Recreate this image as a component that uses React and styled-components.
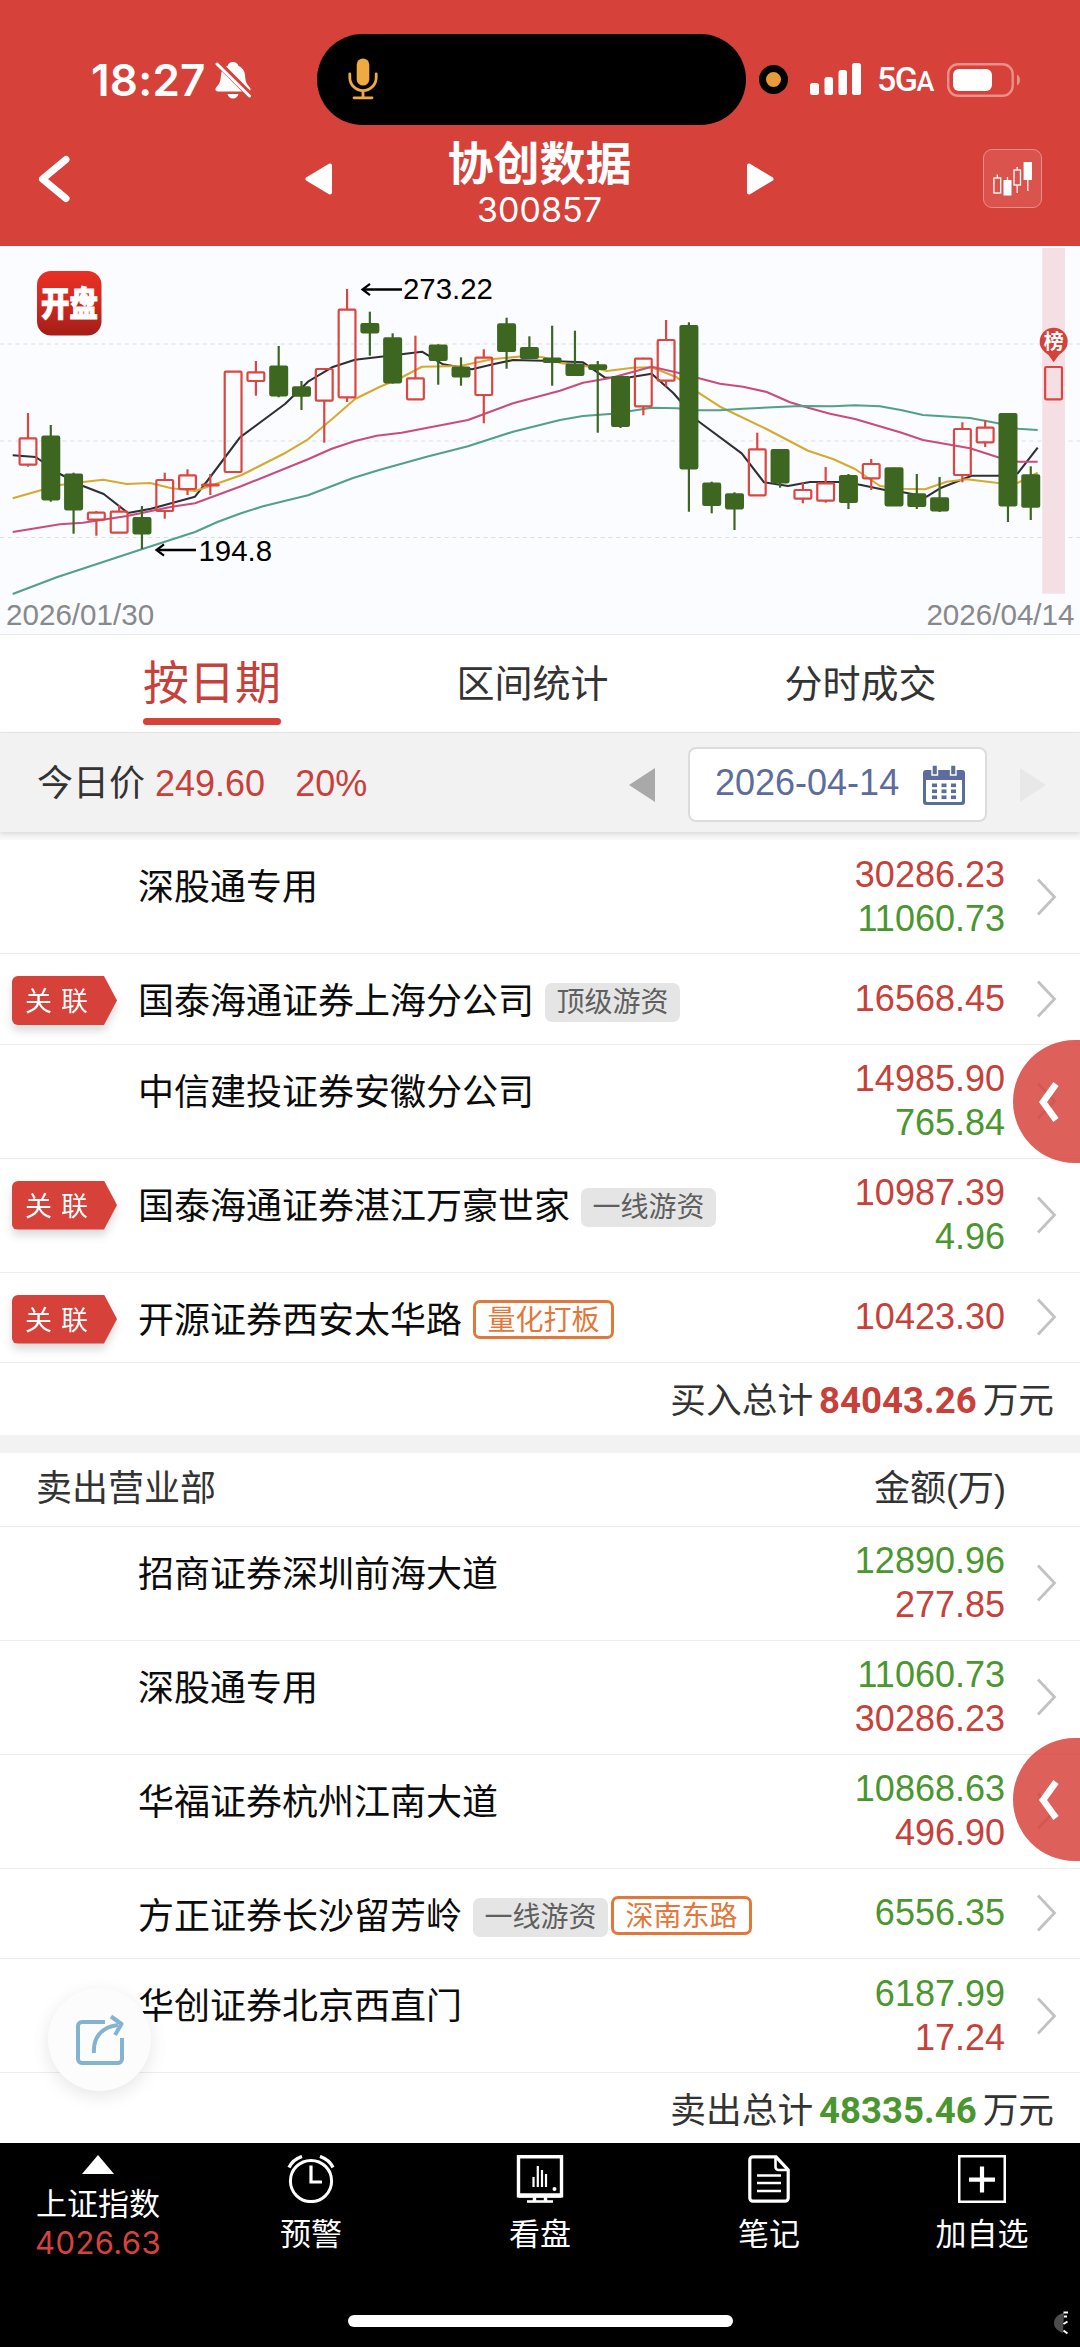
import styled, { createGlobalStyle, css } from "styled-components"

const colors = {
  brand: "#d6413a",
  red: "#c8403a",
  green: "#4a962f",
  candleGreen: "#3d6720",
  candleRed: "#dc4640",
  orange: "#e2773a",
  blue: "#5c6c9c",
}

const cjk = `"Noto Sans CJK SC", sans-serif`

const GlobalStyle = createGlobalStyle`
  * { box-sizing: border-box; }
  body {
    margin: 0;
    background: #fff;
    font-family: "Liberation Sans", ${cjk};
    color: #111;
  }
  svg { display: block; }
`

const buyRows = [
  { name: "深股通专用", main: "30286.23", sub: "11060.73" },
  { name: "国泰海通证券上海分公司", linked: true, tags: ["顶级游资"], main: "16568.45" },
  { name: "中信建投证券安徽分公司", main: "14985.90", sub: "765.84" },
  { name: "国泰海通证券湛江万豪世家", linked: true, tags: ["一线游资"], main: "10987.39", sub: "4.96" },
  { name: "开源证券西安太华路", linked: true, seats: ["量化打板"], main: "10423.30" },
]

const sellRows = [
  { name: "招商证券深圳前海大道", main: "12890.96", sub: "277.85" },
  { name: "深股通专用", main: "11060.73", sub: "30286.23" },
  { name: "华福证券杭州江南大道", main: "10868.63", sub: "496.90" },
  { name: "方正证券长沙留芳岭", tags: ["一线游资"], seats: ["深南东路"], main: "6556.35" },
  { name: "华创证券北京西直门", main: "6187.99", sub: "17.24" },
]

// up, high, body top, body bottom, low
const candles = [
  [1, 167, 192.3, 218.7, 220.7],
  [0, 179, 190.7, 253.3, 255.7],
  [0, 226.7, 228.7, 263.3, 287.7],
  [1, 265, 266.7, 273.7, 289.7],
  [1, 259, 265.7, 286.7, 287],
  [0, 260, 272, 287.3, 303],
  [1, 226.7, 234, 265, 272.7],
  [1, 223.3, 229.3, 243, 249],
  [1, 228, 238.5, 239.5, 249],
  [1, 125.7, 125.7, 226, 226],
  [1, 115, 126.3, 135, 149.7],
  [0, 100, 120.7, 149.3, 151.3],
  [0, 135, 141.3, 149.7, 164],
  [1, 122.5, 123, 154.7, 196.7],
  [1, 43, 63.7, 151.3, 156],
  [0, 65.7, 78, 86.3, 109.7],
  [0, 87.3, 92.3, 136.3, 137.7],
  [1, 89.7, 132.3, 153.3, 153.3],
  [0, 98.3, 99.7, 114, 138.7],
  [0, 111.3, 121.7, 130.3, 139.7],
  [1, 103.3, 111.7, 149, 177.3],
  [0, 71.7, 78.3, 105, 122.7],
  [0, 90.3, 102, 112, 112.7],
  [0, 79.7, 112.7, 116, 139.7],
  [0, 84.7, 118.7, 129, 129],
  [0, 115, 119.3, 123, 186.7],
  [0, 131, 131, 180, 182],
  [1, 111.7, 112.7, 160.3, 169.3],
  [1, 74, 94, 134.7, 140.7],
  [0, 76.3, 80, 222.3, 265.7],
  [0, 235.7, 237.7, 259, 267.3],
  [0, 246.3, 248.3, 262.3, 284],
  [1, 186.7, 203.3, 249.3, 249.3],
  [0, 204, 204, 236.3, 241.7],
  [1, 236.3, 244, 252.7, 257.3],
  [1, 221, 237.3, 254.7, 256.7],
  [0, 228, 230, 256, 263],
  [1, 213, 218, 232.3, 244],
  [0, 221.7, 222.3, 259.3, 259.3],
  [0, 228, 248.3, 260, 263],
  [0, 231, 252.3, 264.3, 266],
  [1, 176.3, 183, 229, 236.3],
  [1, 174.3, 181.7, 196.3, 201],
  [0, 168, 168, 259.3, 276],
  [0, 220.3, 229.3, 260.7, 274],
  [1, 121, 121, 153.3, 153.3],
]

const averages = [
  {
    color: "#2e3033",
    points:
      "12.7,209.3 35.7,211 60,228 83,240 103.7,248 128,267 151,262.7 195,250.7 208,234 240,191.3 285,158 308,135.7 332,121.3 355,113.7 385,110.3 422,105.7 443,118.3 472,123.3 493,118.3 513,114 543,114.7 583,116.3 605,131.7 630,131.3 651.7,127.7 673,146.7 698,175 741.7,207.3 764,236.3 788,240 810,236 840,236 860,238.7 885,244 903,246.3 926.7,250.7 940,242.3 971.7,229.7 998,229.7 1017.7,227.3 1037.7,201.7",
  },
  {
    color: "#d7a92c",
    points:
      "12.7,252.3 41.7,244 60,239 83,236 103.3,233.7 126.7,238 150,237 171.7,242.3 195,245 210,240 241.7,229 285.7,206.7 308,193.3 333,172.3 355,153 380,140.7 400,132.3 422,120.7 460,120 493,113 527,110 543,111.3 561.7,117.3 590,120.7 606.7,125 633,121.7 651.7,121.3 676.7,131.3 698,146.3 720,160.7 765,182.3 808,204.7 833,213 855,223 880,240 903,242.7 925,243.3 946.7,235.7 966.7,233.3 998,237 1018,236.7 1037.7,226.7",
  },
  {
    color: "#c84c80",
    points:
      "12.7,286 60,278.3 83,276.7 127,270 171.7,260.7 195,257.3 241.7,240 308,213.3 331.7,202.7 355,195 376.7,189.7 401.7,186.7 468,174 513,157.3 560,144.7 583,136.7 611.7,131.7 651.7,120.7 678,126.7 720,137.7 743,140.7 766.7,146 790,156.3 810,162.3 830,167.7 855,173 900,186.3 923,194 970,202.3 998,211.3 1018,215.7 1037.7,215.7",
  },
  {
    color: "#51a087",
    points:
      "12.7,348 56.7,331.3 141.7,303.3 195,286 218,275.7 241.7,267 263,260.3 308,249.3 353,232 380,223.7 426.7,210.7 468,200.3 513,185.7 560,174 583,170 613,167.7 651.7,161.7 677,162.3 698,164.3 720,164.3 743,162.7 800,160 833,160.3 855,159.3 880,160.3 902,164.3 923,169 970,172 998,177.3 1018,182.7 1037.7,184",
  },
]

const Candle = ({ index, data }) => {
  const [up, high, top, bottom, low] = data
  const x = 28 + 22.79 * index
  const color = up ? colors.candleRed : colors.candleGreen
  return (
    <g stroke={color} strokeWidth="2.2">
      {high < top && <line x1={x} x2={x} y1={high} y2={top} />}
      {low > bottom && <line x1={x} x2={x} y1={bottom} y2={low} />}
      <rect
        x={x - 8.4}
        y={top}
        width="16.8"
        height={bottom - top}
        rx="1"
        fill={up ? "none" : color}
      />
    </g>
  )
}

const Arrow = ({ x, y }) => (
  <g stroke="#000" fill="none">
    <path d={`M${x + 2} ${y}H${x + 41}`} strokeWidth="2.6" />
    <path d={`M${x + 9} ${y - 5.6}L${x + 1.5} ${y}L${x + 9} ${y + 5.6}`} strokeWidth="2.2" />
  </g>
)

const KLine = () => (
  <ChartView>
    <svg width="1080" height="389" viewBox="0 0 1080 389">
      <defs>
        <linearGradient id="logo" x1="0" y1="0" x2="0" y2="1">
          <stop offset="0" stopColor="#ea2f24" />
          <stop offset="0.5" stopColor="#cf2a20" />
          <stop offset="1" stopColor="#a31d16" />
        </linearGradient>
      </defs>
      {[98, 195, 291.5].map((y) => (
        <line key={y} x1="0" x2="1080" y1={y} y2={y} stroke="#dcdde1" strokeWidth="1.2" strokeDasharray="4 3.8" />
      ))}
      <rect x="1042.3" y="2" width="22.7" height="345.7" fill="#f4dfe4" />
      {averages.map((line) => (
        <polyline key={line.color} points={line.points} fill="none" stroke={line.color} strokeWidth="2.1" strokeLinejoin="round" />
      ))}
      {candles.map((data, i) => (
        <Candle key={i} index={i} data={data} />
      ))}
      <path d="M1053.7 81.7a14 14 0 0 1 14 14c0 7-5 10.500-9 13.500l-5 7-5-7c-4-3-9-6.500-9-13.500a14 14 0 0 1 14-14z" fill={colors.brand} />
      <PinText x="1053.7" y="103">榜</PinText>
      <rect x="37" y="25" width="64.500" height="64.500" rx="14" fill="url(#logo)" />
      <LogoText x="69.5" y="58" transform="translate(0 -13.5) scale(1 1.19)">开盘</LogoText>
      <Arrow x={361} y={43.5} />
      <PriceText x="403" y="53">273.22</PriceText>
      <Arrow x={155} y={304} />
      <PriceText x="198.5" y="314.500">194.8</PriceText>
      <DateText x="6" y="378.500">2026/01/30</DateText>
      <DateText x="1074.5" y="378.500" textAnchor="end">2026/04/14</DateText>
    </svg>
  </ChartView>
)

const SeatList = ({ rows, mainColor, subColor }) =>
  rows.map((row) => (
    <SeatRow key={row.name} $tall={!!row.sub}>
      <LinkCell>{row.linked && <LinkBadge><span>关 联</span></LinkBadge>}</LinkCell>
      <SeatName>
        <span>{row.name}</span>
        {(row.tags || row.seats) && (
          <Tags>
            {row.tags?.map((t) => <Tag key={t}>{t}</Tag>)}
            {row.seats?.map((t) => <Tag key={t} $outline>{t}</Tag>)}
          </Tags>
        )}
      </SeatName>
      <Amounts>
        <Amount $color={mainColor}>{row.main}</Amount>
        {row.sub && <Amount $color={subColor}>{row.sub}</Amount>}
      </Amounts>
      <svg width="22" height="38" viewBox="0 0 22 38" fill="none" stroke="#c2c2c4" strokeWidth="2.8">
        <path d="M2 1.500L18.500 19L2 36.500" />
      </svg>
    </SeatRow>
  ))

const SideHandle = ({ top }) => (
  <Handle $top={top}>
    <svg width="26" height="44" viewBox="0 0 26 44" fill="none" stroke="#fff" strokeWidth="6.500">
      <path d="M23 4L10 22L23 40" />
    </svg>
  </Handle>
)

export default function App() {
  return (
    <Page>
      <GlobalStyle />
      <Header>
        <StatusBar>
          <Clock>
            18:27
            <svg width="36" height="38" viewBox="0 0 36 38" fill="#fff">
              <path d="M18 1c-3.200 0-5 2-5.500 4-3.500 1.200-6 4.500-6.500 9-.4 6-1.500 9-4.500 12-2 2-1 4.500 1.500 4.500h30c2.500 0 3.500-2.500 1.500-4.500-3-3-4.100-6-4.500-12-.5-4.500-3-7.800-6.500-9C23 3 21.200 1 18 1zM12.500 33h11c-.5 2.700-2.700 4.500-5.500 4.500s-5-1.800-5.500-4.500z" />
              <path d="M1 0L36 35" stroke={colors.brand} strokeWidth="6.500" />
              <path d="M2 3L34.500 35" stroke="#fff" strokeWidth="3" strokeLinecap="round" />
            </svg>
          </Clock>
          <Island>
            <svg width="30" height="42" viewBox="0 0 30 42" fill="none" stroke="#efab41" strokeWidth="2.800" strokeLinecap="round">
              <rect x="8.700" y=".5" width="12.600" height="27" rx="6.300" fill="#efab41" stroke="none" />
              <path d="M1.800 16v3.500a13.200 13.200 0 0 0 26.400 0V16M15 33v6.500M6 39.800h18" />
            </svg>
          </Island>
          <Signals>
            <MicDot />
            <svg width="52" height="33" viewBox="0 0 52 33" fill="#fff">
              <rect x="0" y="20" width="9" height="12" rx="2.500" />
              <rect x="14.500" y="14" width="8.500" height="18" rx="2.500" />
              <rect x="28.500" y="7" width="8.500" height="25" rx="2.500" />
              <rect x="42" y="0" width="9" height="32" rx="2.500" />
            </svg>
            <Network>5G<small>A</small></Network>
            <svg width="74" height="34" viewBox="0 0 74 34">
              <rect x="1.200" y="1.200" width="64.500" height="31.600" rx="10" fill="none" stroke="#ec8e89" strokeWidth="2.400" />
              <rect x="6" y="6" width="39" height="22" rx="6" fill="#fff" />
              <path d="M70 11.500c4 2 4 9 0 11z" fill="#ec8e89" />
            </svg>
          </Signals>
        </StatusBar>
        <NavBar>
          <svg width="40" height="54" viewBox="0 0 40 54" fill="none" stroke="#fff" strokeWidth="7" strokeLinecap="round" strokeLinejoin="round">
            <path d="M28 7.500L4.500 27L28 46.500" />
          </svg>
          <Triangle width="27" height="32" viewBox="0 0 27 32">
            <path d="M25 2.500v27L2.500 16z" />
          </Triangle>
          <Title>
            <h1>协创数据</h1>
            <p>300857</p>
          </Title>
          <Triangle width="27" height="32" viewBox="0 0 27 32">
            <path d="M2 2.500v27L24.500 16z" />
          </Triangle>
          <ChartButton>
            <svg width="40" height="36" viewBox="0 0 40 36" fill="none" stroke="#fff" strokeWidth="1.300">
              <rect x=".9" y="17" width="6.800" height="15" />
              <path d="M4.300 13.500V17M14.500 16v4M24.200 6v3M24.200 24.500V32M34.800 18v12" />
              <rect x="10.500" y="19" width="8" height="15.500" fill="#fff" stroke="none" />
              <rect x="21" y="9" width="6.500" height="15" />
              <rect x="30.600" y="1" width="8.400" height="18" fill="#fff" stroke="none" />
            </svg>
          </ChartButton>
        </NavBar>
      </Header>

      <KLine />

      <Tabs>
        <Tab $active>按日期</Tab>
        <Tab>区间统计</Tab>
        <Tab>分时成交</Tab>
      </Tabs>

      <PriceBar>
        <div className="price">
          今日价 <b>249.60</b> <b>20%</b>
        </div>
        <div className="picker">
          <svg width="26" height="34" viewBox="0 0 26 34" fill="#a9a9a9">
            <path d="M26 0v34L0 17z" />
          </svg>
          <DateBox>
            <span>2026-04-14</span>
            <svg width="42" height="40" viewBox="0 0 42 40" fill={colors.blue}>
              <path fillRule="evenodd" d="M3 5h36a3 3 0 0 1 3 3v29a3 3 0 0 1-3 3H3a3 3 0 0 1-3-3V8a3 3 0 0 1 3-3zM3 15v20.500a1.500 1.500 0 0 0 1.500 1.500h33a1.500 1.500 0 0 0 1.500-1.500V15z" />
              <path d="M9 0h5.500v10H9zM27.500 0H33v10h-5.500z" stroke="#fff" strokeWidth="1.400" />
              {[18.5, 24.5, 30.5].map((y) =>
                [9, 18.5, 28].map((x) => <rect key={x + "-" + y} x={x} y={y} width="5" height="3.600" />)
              )}
            </svg>
          </DateBox>
          <svg width="26" height="34" viewBox="0 0 26 34" fill="#e8e8e8">
            <path d="M0 0v34L26 17z" />
          </svg>
        </div>
      </PriceBar>

      <Lists>
        <SeatList rows={buyRows} mainColor={colors.red} subColor={colors.green} />
        <Total $color={colors.red}>
          买入总计<b>84043.26</b>万元
        </Total>
        <SectionHead>
          <span>卖出营业部</span>
          <span>金额(万)</span>
        </SectionHead>
        <SeatList rows={sellRows} mainColor={colors.green} subColor={colors.red} />
        <Total $color={colors.green}>
          卖出总计<b>48335.46</b>万元
        </Total>
        <SideHandle top={200} />
        <SideHandle top={898} />
        <ShareButton>
          <svg width="48" height="52" viewBox="0 0 48 52" fill="none" stroke="#82b4d2" strokeWidth="4">
            <path d="M29 8H6a4 4 0 0 0-4 4v33a4 4 0 0 0 4 4h36a4 4 0 0 0 4-4V24" />
            <path d="M18 39C17 25 24 13 42 11" />
            <path d="M35 2.500L45.500 10L39 21" strokeLinejoin="round" />
          </svg>
        </ShareButton>
      </Lists>

      <Footer>
        <FooterItem $w={196}>
          <svg width="32" height="19" viewBox="0 0 32 19" fill="#fff">
            <path d="M16 0L32 19H0z" />
          </svg>
          <IndexName>上证指数</IndexName>
          <IndexValue>4026.63</IndexValue>
        </FooterItem>
        <FooterItem $w={230}>
          <svg width="48" height="48" viewBox="0 0 48 48" fill="none" stroke="#fff" strokeWidth="3">
            <circle cx="24" cy="26" r="20.600" />
            <path d="M24 10.500V27h11" strokeWidth="3.200" />
            <path d="M2 12.500C4.500 7.500 9 3.500 15 1.500M46 12.500C43.500 7.500 39 3.500 33 1.500" strokeWidth="3.400" />
          </svg>
          <span>预警</span>
        </FooterItem>
        <FooterItem $w={228}>
          <svg width="48" height="48" viewBox="0 0 48 48" fill="none" stroke="#fff" strokeWidth="3.400">
            <path d="M2.500 1.800h43v39h-43z" />
            <path d="M2.500 40.500h43" strokeWidth="4.400" />
            <path d="M18.500 42v4M29.500 42v4" />
            <path d="M11 46.500h26" strokeWidth="2.600" />
            <path d="M17.500 22v10M21.800 11v21M26 15v17M30 19v13" strokeWidth="2.200" />
            <circle cx="38.500" cy="34" r="2" fill="#fff" stroke="none" />
          </svg>
          <span>看盘</span>
        </FooterItem>
        <FooterItem $w={230}>
          <svg width="42" height="48" viewBox="0 0 42 48" fill="none" stroke="#fff" strokeWidth="3.200">
            <path d="M28 1.800H5A3.200 3.200 0 0 0 1.800 5v38A3.200 3.200 0 0 0 5 46.200h32a3.200 3.200 0 0 0 3.200-3.200V15z" />
            <path d="M27.500 2v10a3 3 0 0 0 3 3h9.500" strokeWidth="2.600" />
            <path d="M9 20.500h24M9 28h24M9 36h24" strokeWidth="2.600" />
          </svg>
          <span>笔记</span>
        </FooterItem>
        <FooterItem $w={196}>
          <svg width="48" height="48" viewBox="0 0 48 48" fill="none" stroke="#fff">
            <path d="M1.200 1.200h45.600v45.600H1.200z" strokeWidth="2.600" />
            <path d="M24 11.500v26M11 24.700h26" strokeWidth="4.200" />
          </svg>
          <span>加自选</span>
        </FooterItem>
        <HomeIndicator />
        <Corner width="14" height="24" viewBox="0 0 14 24">
          <path d="M10 2C4 3 0 7 0 12s4 8 9 10z" fill="#4c4c4c" />
          <path d="M9.500 1.500h4.500M10 5.500h3M9.500 13l4-2.500M9.500 19.500l4 3" stroke="#fff" strokeWidth="2" />
        </Corner>
      </Footer>
    </Page>
  )
}

const Page = styled.div`
  width: 1080px;
  height: 2347px;
  overflow: hidden;
  background: #fff;
`

const Header = styled.header`
  height: 246px;
  background: ${colors.brand};
  color: #fff;
`

const StatusBar = styled.div`
  display: grid;
  grid-template-columns: 317px 429px 1fr;
  align-items: center;
  padding-top: 34px;
  height: 125px;
`

const Clock = styled.div`
  display: flex;
  align-items: center;
  gap: 9px;
  padding-left: 91px;
  font: 600 44px/50px Inter, sans-serif;
  letter-spacing: 0.2px;
  svg {
    flex: none;
  }
`

const Island = styled.div`
  display: flex;
  align-items: center;
  height: 91px;
  padding-left: 31px;
  padding-bottom: 2px;
  border-radius: 46px;
  background: #000;
`

const Signals = styled.div`
  display: flex;
  align-items: center;
  padding-left: 13px;
`

const MicDot = styled.i`
  width: 29px;
  height: 29px;
  margin-right: 22px;
  border: 7.5px solid #000;
  border-radius: 50%;
  background: #e99b3a;
`

const Network = styled.div`
  width: 56px;
  margin: 2px 14px 0 15px;
  font: 500 34px/40px Roboto, sans-serif;
  letter-spacing: -1.5px;
  white-space: nowrap;
  small {
    font-size: 27px;
  }
`

const NavBar = styled.div`
  display: grid;
  grid-template-columns: 305px 27px 1fr 27px 208px 98px;
  align-items: center;
  height: 107px;
  > svg:first-child {
    margin-left: 38px;
  }
`

const Triangle = styled.svg`
  fill: #fff;
  stroke: #fff;
  stroke-width: 4;
  stroke-linejoin: round;
`

const Title = styled.div`
  text-align: center;
  margin-top: 6px;
  h1 {
    margin: 0 0 10px;
    font: 700 46px/46px ${cjk};
  }
  p {
    margin: 0;
    font: 400 34px/34px Inter, sans-serif;
    letter-spacing: 0;
  }
`

const ChartButton = styled.div`
  grid-column: 6;
  display: flex;
  align-items: center;
  justify-content: center;
  width: 59px;
  height: 59px;
  margin-left: 1px;
  border: 1.5px solid #eb8d88;
  border-radius: 9px;
  background: #da534d;
`

const ChartView = styled.section`
  height: 389px;
  background: #fbfcff;
  border-bottom: 1px solid #e6e8ec;
`

const PriceText = styled.text`
  font: 29.4px "Liberation Sans", sans-serif;
`

const DateText = styled.text`
  font: 29.6px "Liberation Sans", sans-serif;
  fill: #88898c;
`

const PinText = styled.text`
  font: 700 20px ${cjk};
  fill: #fff;
  text-anchor: middle;
`

const LogoText = styled.text`
  font: 900 28.5px ${cjk};
  fill: #fff;
  stroke: #fff;
  stroke-width: 0.8;
  text-anchor: middle;
  dominant-baseline: central;
`

const Tabs = styled.nav`
  display: flex;
  height: 98px;
  padding-left: 48px;
  border-bottom: 1px solid #e8e8e8;
`

const Tab = styled.div`
  width: 328px;
  text-align: center;
  font: 38px/92px ${cjk};
  color: #333;
  &:nth-child(2) {
    width: 313px;
  }
  &:nth-child(3) {
    width: 343px;
  }
  ${(p) =>
    p.$active &&
    css`
      display: flex;
      flex-direction: column;
      align-items: center;
      font-size: 46px;
      line-height: 89px;
      color: ${colors.red};
      &::after {
        content: "";
        width: 138px;
        height: 7px;
        margin-top: -6px;
        border-radius: 4px;
        background: ${colors.brand};
      }
    `}
`

const PriceBar = styled.div`
  position: relative;
  z-index: 1;
  display: flex;
  align-items: center;
  justify-content: space-between;
  height: 99px;
  padding: 4px 34px 0 37px;
  background: #f2f2f2;
  box-shadow: 0 2px 5px rgba(0, 0, 0, 0.13);
  .price {
    margin-top: -9px;
    font-size: 36px;
    color: #333;
    b {
      font-weight: 400;
      color: ${colors.red};
    }
    b:last-child {
      margin-left: 20px;
    }
  }
  .picker {
    display: flex;
    align-items: center;
    gap: 33px;
  }
`

const DateBox = styled.div`
  display: flex;
  align-items: center;
  justify-content: space-between;
  width: 299px;
  height: 75px;
  padding: 0 20px 0 25px;
  border: 2px solid #dcdcdc;
  border-radius: 8px;
  background: #fff;
  font-size: 36px;
  color: ${colors.blue};
  span {
    margin-top: -3px;
  }
`

const Lists = styled.main`
  position: relative;
  height: 1311px;
  border-top: 8px solid #f8f8f8;
`

const SeatRow = styled.div`
  display: flex;
  align-items: center;
  height: ${(p) => (p.$tall ? 114 : 90.5)}px;
  padding-right: 22px;
  border-bottom: 1.5px solid #ededed;
`

const LinkCell = styled.div`
  align-self: flex-start;
  width: 138px;
  padding: 22px 0 0 12px;
`

const LinkBadge = styled.div`
  width: 105px;
  height: 49px;
  filter: drop-shadow(0 6px 4px rgba(0, 0, 0, 0.14));
  span {
    display: block;
    height: 49px;
    padding-left: 13px;
    border-radius: 6px 0 0 6px;
    background: ${colors.brand};
    clip-path: polygon(0 0, 92px 0, 100% 50%, 92px 100%, 0 100%);
    font: 27px/47px ${cjk};
    word-spacing: 3px;
    color: #fff;
    white-space: nowrap;
  }
`

const SeatName = styled.div`
  display: flex;
  align-self: flex-start;
  flex: 1;
  font: 36px/89px ${cjk};
  color: #0c0c0c;
  white-space: nowrap;
`

const Tags = styled.div`
  display: flex;
  align-items: flex-start;
  gap: 3px;
  margin: 27px 0 0 11px;
`

const Tag = styled.span`
  height: 39px;
  padding: 0 11.5px;
  border-radius: 7px;
  font: 28px/34px ${cjk};
  ${(p) =>
    p.$outline
      ? css`
          border: 3px solid ${colors.orange};
          line-height: 30px;
          color: ${colors.orange};
        `
      : css`
          margin-top: 2px;
          background: #e5e5e5;
          color: #5f5f5f;
        `}
`

const Amounts = styled.div`
  margin-right: 31px;
  text-align: right;
`

const Amount = styled.div`
  font-size: 36px;
  line-height: 44px;
  color: ${(p) => p.$color};
`

const Total = styled.div`
  height: 72px;
  padding-right: 26px;
  text-align: right;
  font: 35.7px/69px ${cjk};
  color: #333;
  b {
    margin: 0 6px;
    font: 700 36.6px/60px Roboto, sans-serif;
    color: ${(p) => p.$color};
  }
`

const SectionHead = styled.div`
  display: flex;
  justify-content: space-between;
  height: 91.5px;
  padding: 0 74px 0 36px;
  border-top: 18.5px solid #f2f2f2;
  border-bottom: 1.5px solid #ededed;
  font: 36px/71px "Liberation Sans", ${cjk};
  color: #333;
`

const Handle = styled.div`
  position: absolute;
  top: ${(p) => p.$top}px;
  right: 0;
  display: flex;
  align-items: center;
  width: 67px;
  height: 123px;
  padding-left: 20px;
  border-radius: 62px 0 0 62px;
  background: rgba(214, 65, 58, 0.84);
`

const ShareButton = styled.div`
  position: absolute;
  top: 1148px;
  left: 48px;
  display: flex;
  align-items: center;
  justify-content: center;
  width: 103px;
  height: 103px;
  border-radius: 50%;
  background: #fcfcfc;
  box-shadow: 0 5px 18px rgba(0, 0, 0, 0.1);
`

const Footer = styled.footer`
  position: relative;
  display: flex;
  height: 204px;
  padding-top: 12px;
  background: #000;
  color: #fff;
`

const FooterItem = styled.div`
  display: flex;
  flex-direction: column;
  align-items: center;
  width: ${(p) => p.$w}px;
  font: 31px/40px ${cjk};
  span {
    margin-top: 9px;
  }
  > svg {
    flex: none;
  }
`

const IndexName = styled.div`
  margin-top: 8px;
`

const IndexValue = styled.div`
  font: 400 31px/38px Inter, sans-serif;
  margin-top: 2px;
  letter-spacing: 0.4px;
  color: #d8423d;
`

const HomeIndicator = styled.i`
  position: absolute;
  left: 348px;
  bottom: 20px;
  width: 385px;
  height: 12px;
  border-radius: 6px;
  background: #fff;
`

const Corner = styled.svg`
  position: absolute;
  right: 12px;
  bottom: 12px;
`
